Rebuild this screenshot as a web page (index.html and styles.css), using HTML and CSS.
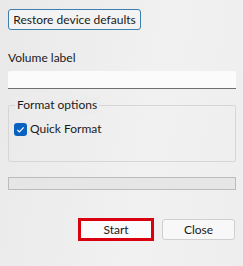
FILE: index.html
```html
<!DOCTYPE html>
<html>
<head>
<meta charset="utf-8">
<link rel="stylesheet" href="styles.css">
</head>
<body>
<div class="dialog">
  <button class="btn restore">Restore device defaults</button>
  <div class="label">Volume label</div>
  <div class="input"></div>
  <div class="group">
    <div class="legend">Format options</div>
    <label class="check">
      <span class="box"><svg width="13" height="13" viewBox="0 0 13 13"><path d="M3.3 6.8 L5.4 8.9 L9.7 4.3" fill="none" stroke="#ffffff" stroke-width="1.2"/></svg></span>
      <span>Quick Format</span>
    </label>
  </div>
  <div class="progress"></div>
  <div class="actions">
    <button class="btn start">Start</button>
    <button class="btn close">Close</button>
  </div>
</div>
</body>
</html>
```
FILE: styles.css
```css
html, body {
  margin: 0;
  padding: 0;
}
body {
  width: 243px;
  height: 266px;
  background: linear-gradient(100deg, #e9e9e9 0%, #f1f1f1 60%, #eeeeee 100%);
  font-family: Lato, "Noto Sans", sans-serif;
  font-size: 12px;
  color: #1a1a1a;
  overflow: hidden;
}
.dialog {
  padding: 9px 7px 0 8px;
  display: flex;
  flex-direction: column;
}
.btn {
  font-family: inherit;
  font-size: 12px;
  color: #1a1a1a;
  background: #f5f5f5;
  border: 1px solid #d0d0d0;
  border-radius: 3px;
  padding: 0;
  line-height: 16px;
}
.restore {
  align-self: flex-start;
  width: 133px;
  height: 21px;
  border-color: #3f7fae;
  border-width: 1px;
  box-shadow: inset 0 0 0 1px #f0f4f7;
  background: #f3f3f3;
}
.label {
  margin-top: 20px;
  line-height: 16px;
  height: 16px;
}
.input {
  margin-top: 5px;
  height: 17px;
  background: #fbfbfb;
  border-bottom: 1px solid #6f6f6f;
  border-radius: 2px 2px 0 0;
}
.group {
  margin-top: 16px;
  height: 57px;
  border: 1px solid #d6d6d6;
  border-radius: 2px;
  position: relative;
  padding: 15px 0 0 5px;
  box-sizing: border-box;
}
.legend {
  position: absolute;
  top: -9px;
  left: 6px;
  padding: 0 2px;
  line-height: 16px;
  background: #ececec;
}
.check {
  display: flex;
  align-items: center;
  gap: 3px;
  line-height: 16px;
}
.box {
  width: 13px;
  height: 13px;
  background: #0a62c0;
  border-radius: 3px;
  display: flex;
}
.progress {
  margin-top: 15px;
  height: 11px;
  border: 1px solid #bcbcbc;
  background: #e6e6e6;
}
.actions {
  margin-top: 28px;
  display: flex;
  justify-content: flex-end;
  align-items: center;
  gap: 8px;
  padding-right: 1px;
}
.start {
  width: 76px;
  height: 23px;
  border: 3px solid #d9000f;
  border-radius: 0;
  background: #fbfbfb;
}
.close {
  width: 73px;
  height: 21px;
  border-color: #cfcfcf;
  background: #f8f8f8;
}
```
